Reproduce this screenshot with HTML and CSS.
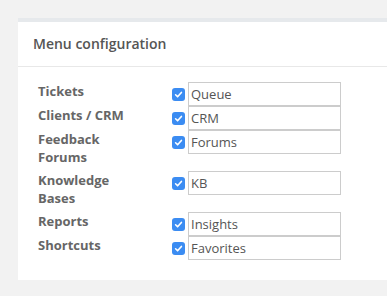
FILE: index.html
```html
<!DOCTYPE html>
<html lang="en">
<head>
  <meta charset="UTF-8" />
  <title>Menu configuration</title>
  <link rel="stylesheet" href="styles.css">
</head>
<body>
  <div class="panel">
    <div class="panel_head">Menu configuration</div>
    <div class="panel_body">
      <div class="menu_grid">
        <div class="menu_label">Tickets</div>
        <div class="menu_ctrl">
          <span class="check"><svg viewBox="0 0 13 13" width="13" height="13"><path d="M3.6 6.8 L5.6 8.8 L9.4 4.4" fill="none" stroke="#fff" stroke-width="1.6" stroke-linecap="round" stroke-linejoin="round"/></svg></span>
          <input type="text" value="Queue" />
        </div>

        <div class="menu_label">Clients / CRM</div>
        <div class="menu_ctrl">
          <span class="check"><svg viewBox="0 0 13 13" width="13" height="13"><path d="M3.6 6.8 L5.6 8.8 L9.4 4.4" fill="none" stroke="#fff" stroke-width="1.6" stroke-linecap="round" stroke-linejoin="round"/></svg></span>
          <input type="text" value="CRM" />
        </div>

        <div class="menu_label">Feedback<br>Forums</div>
        <div class="menu_ctrl">
          <span class="check"><svg viewBox="0 0 13 13" width="13" height="13"><path d="M3.6 6.8 L5.6 8.8 L9.4 4.4" fill="none" stroke="#fff" stroke-width="1.6" stroke-linecap="round" stroke-linejoin="round"/></svg></span>
          <input type="text" value="Forums" />
        </div>

        <div class="menu_label">Knowledge<br>Bases</div>
        <div class="menu_ctrl">
          <span class="check"><svg viewBox="0 0 13 13" width="13" height="13"><path d="M3.6 6.8 L5.6 8.8 L9.4 4.4" fill="none" stroke="#fff" stroke-width="1.6" stroke-linecap="round" stroke-linejoin="round"/></svg></span>
          <input type="text" value="KB" />
        </div>

        <div class="menu_label">Reports</div>
        <div class="menu_ctrl">
          <span class="check"><svg viewBox="0 0 13 13" width="13" height="13"><path d="M3.6 6.8 L5.6 8.8 L9.4 4.4" fill="none" stroke="#fff" stroke-width="1.6" stroke-linecap="round" stroke-linejoin="round"/></svg></span>
          <input type="text" value="Insights" />
        </div>

        <div class="menu_label">Shortcuts</div>
        <div class="menu_ctrl">
          <span class="check"><svg viewBox="0 0 13 13" width="13" height="13"><path d="M3.6 6.8 L5.6 8.8 L9.4 4.4" fill="none" stroke="#fff" stroke-width="1.6" stroke-linecap="round" stroke-linejoin="round"/></svg></span>
          <input type="text" value="Favorites" />
        </div>
      </div>
    </div>
  </div>
</body>
</html>
```

FILE: styles.css
```css
body {
  margin: 0;
  padding: 18px 0 0 18px;
  background-color: #f2f2f2;
  font-family: "Open Sans", "Liberation Sans", sans-serif;
}

.panel {
  background-color: #fff;
  border-top: 4px solid #e6e9ec;
}

.panel_head {
  height: 44px;
  line-height: 44px;
  padding-left: 15px;
  font-size: 14px;
  font-weight: 600;
  color: #555;
  border-bottom: 1px solid #e8e8e8;
}

.panel_body {
  padding: 15px 0 20px 20px;
}

.menu_grid {
  display: grid;
  grid-template-columns: 134px auto;
  align-items: start;
}

.menu_label {
  font-size: 13px;
  line-height: 18px;
  font-weight: 700;
  color: #666;
  padding-bottom: 5px;
}

.menu_ctrl {
  display: flex;
  align-items: center;
  gap: 3px;
}

.check {
  width: 13px;
  height: 13px;
  border-radius: 3px;
  background-color: #3b8cf2;
  display: flex;
}

.menu_ctrl input {
  width: 153px;
  height: 24px;
  box-sizing: border-box;
  margin: 0;
  padding: 0 2px;
  border: 1px solid #ccc;
  border-radius: 0;
  font-family: "Open Sans", "Liberation Sans", sans-serif;
  font-size: 13px;
  color: #555;
  outline: none;
}
```
